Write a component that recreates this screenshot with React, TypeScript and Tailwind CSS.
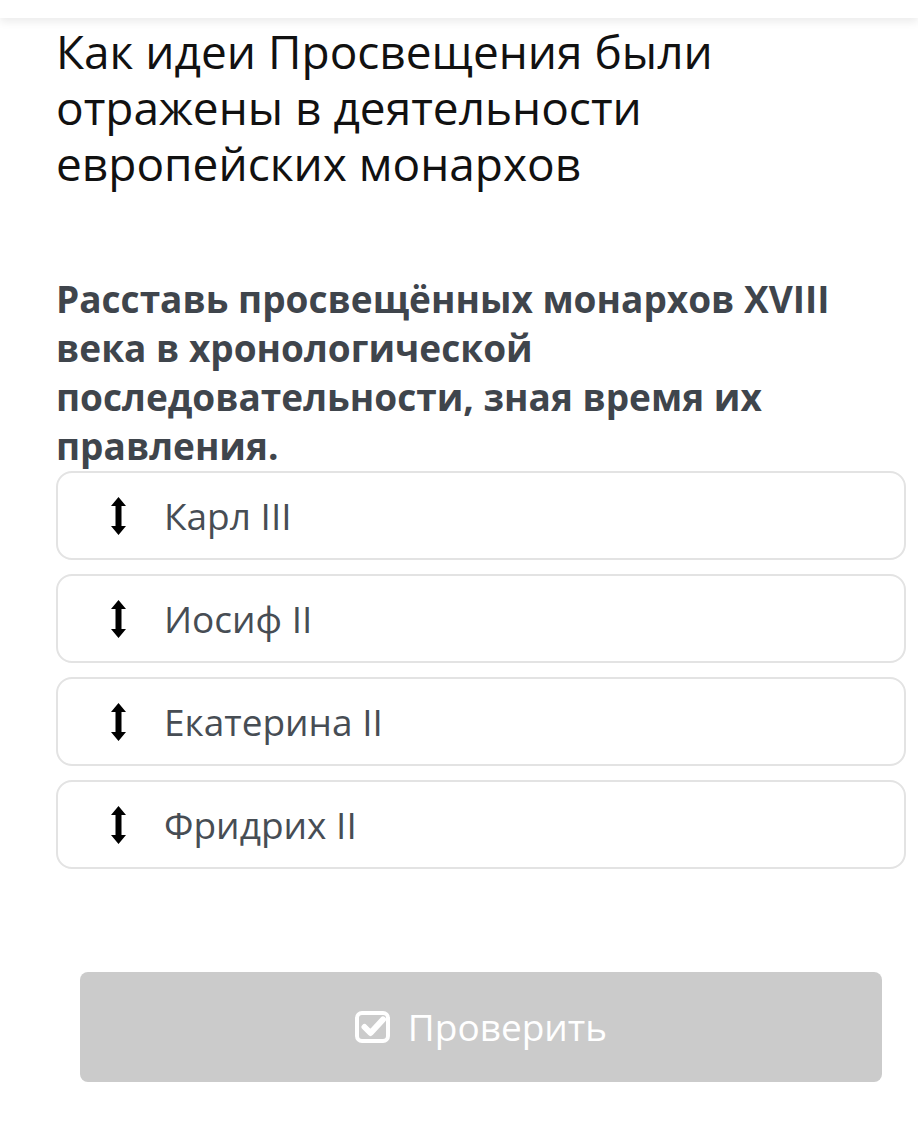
import React from "react";

const ArrowUD = () => (
  <svg width="15" height="38" viewBox="0 0 15 38" className="shrink-0">
    <path d="M7.5 0 L15 9 L10.5 9 L10.5 29 L15 29 L7.5 38 L0 29 L4.5 29 L4.5 9 L0 9 Z" fill="#000" />
  </svg>
);

const CheckSquare = () => (
  <svg width="37" height="34" viewBox="0 0 37 34" className="shrink-0">
    <rect x="2" y="3" width="31" height="28" rx="5" fill="none" stroke="#fff" strokeWidth="4" />
    <path d="M9.5 17 L15.5 23 L28 9.5" fill="none" stroke="#fff" strokeWidth="6" strokeLinecap="round" strokeLinejoin="round" />
  </svg>
);

const items = ["Карл III", "Иосиф II", "Екатерина II", "Фридрих II"];

export default function App() {
  return (
    <div className="min-h-[1139px] bg-white" style={{ fontFamily: '"Open Sans", "Noto Sans", sans-serif' }}>
      <div className="h-[18px] bg-white shadow-[0_4px_8px_rgba(0,0,0,0.08)]" />
      <div className="pl-[56px] pr-[12px]">
        <h1 className="mt-[5px] text-[46px] leading-[56px] font-normal text-[#111]">
          Как идеи Просвещения были отражены в деятельности европейских монархов
        </h1>
        <p className="mt-[83px] text-[37px] leading-[49px] font-bold text-[#3f454c] pr-[50px]">
          Расставь просвещённых монархов XVIII века в хронологической последовательности, зная время их правления.
        </p>
        <div className="mt-[1px] flex flex-col gap-[14px]">
          {items.map((t) => (
            <div
              key={t}
              className="h-[89px] rounded-[16px] border-2 border-[#e3e3e3] flex items-center pl-[53px]"
            >
              <ArrowUD />
              <span className="ml-[38px] text-[37px] text-[#474d54]">{t}</span>
            </div>
          ))}
        </div>
      </div>
      <div className="pl-[80px] pr-[36px] mt-[103px]">
        <div className="h-[110px] rounded-[8px] bg-[#cbcbcb] flex items-center justify-center gap-[16px]">
          <CheckSquare />
          <span className="text-[37px] text-white">Проверить</span>
        </div>
      </div>
    </div>
  );
}
